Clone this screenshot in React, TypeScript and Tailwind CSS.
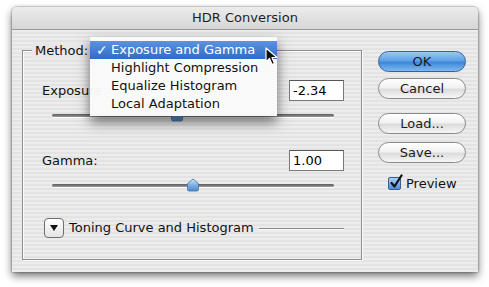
import React from "react";

const font = { fontFamily: '"DejaVu Sans", "Liberation Sans", sans-serif' };

function Slider({ pos }: { pos: number }) {
  return (
    <div className="relative h-[14px] mx-[10px]">
      <div className="absolute left-0 right-0 top-[6px] h-[3px] rounded-full bg-[linear-gradient(#5a5a5a,#9a9a9a)] shadow-[0_1px_0_#fff]" />
      <div className="absolute top-0" style={{ left: `calc(${pos * 100}% - 7px)` }}>
        <svg width="14" height="14" viewBox="0 0 14 14">
          <defs>
            <linearGradient id="thumbg" x1="0" y1="0" x2="0" y2="1">
              <stop offset="0" stopColor="#cfe3f7" />
              <stop offset="0.5" stopColor="#7fb0e3" />
              <stop offset="1" stopColor="#4a8ad3" />
            </linearGradient>
          </defs>
          <path d="M7 1 L12.5 5.5 L12.5 11.5 Q12.5 13 11 13 L3 13 Q1.5 13 1.5 11.5 L1.5 5.5 Z" fill="url(#thumbg)" stroke="#4a6f96" strokeWidth="0.8" />
        </svg>
      </div>
    </div>
  );
}

function AquaButton({ label, primary }: { label: string; primary?: boolean }) {
  return (
    <div
      className={
        "h-[21px] w-[88px] rounded-full flex items-center justify-center text-[13px] text-[#1a1a1a] border " +
        (primary
          ? "border-[#3a5f9a] bg-[linear-gradient(#9cc8f2_0%,#5ea2e6_45%,#3d87d9_55%,#7fbaf0_100%)]"
          : "border-[#8a8a8a] bg-[linear-gradient(#ffffff_0%,#f2f2f2_45%,#dcdcdc_55%,#f6f6f6_100%)]")
      }
    >
      {label}
    </div>
  );
}

function Field({ value }: { value: string }) {
  return (
    <div className="w-[55px] h-[21px] bg-white border border-[#7a7a7a] border-t-[#555] flex items-center pl-[3px] text-[13px] text-black">
      {value}
    </div>
  );
}

export default function App() {
  return (
    <div className="w-[489px] h-[287px] bg-white pl-[12px] pt-[7px] overflow-hidden" style={font}>
      <div className="relative w-[466px] h-[265px] rounded-t-[5px] shadow-[0_4px_9px_rgba(0,0,0,0.55),0_0_2px_rgba(0,0,0,0.6)] bg-[repeating-linear-gradient(0deg,#ececec_0px,#ececec_2px,#e3e3e3_2px,#e3e3e3_4px)]">
        {/* Title bar */}
        <div className="h-[23px] rounded-t-[5px] border-b border-[#9a9a9a] bg-[linear-gradient(#ececec,#d6d6d6)] flex items-center justify-center text-[13px] text-[#1e1e1e]">
          HDR Conversion
        </div>
        {/* Body */}
        <div className="flex">
          {/* Group box */}
          <div className="relative ml-[10px] mt-[20px] w-[340px] h-[210px] border border-[#8e8e8e] shadow-[inset_1px_1px_0_#fafafa,1px_1px_0_#fafafa] flex flex-col">
            <div className="absolute left-[9px] top-[-8px] px-[3px] text-[13px] text-[#111] leading-[16px] bg-[#e8e8e8]">
              Method:
            </div>
            <div className="flex items-center justify-between pl-[19px] pr-[17px] mt-[29px] text-[13px] text-[#111]">
              <span>Exposure:</span>
              <Field value="-2.34" />
            </div>
            <div className="pl-[19px] pr-[17px] mt-[7px]">
              <Slider pos={0.445} />
            </div>
            <div className="flex items-center justify-between pl-[19px] pr-[17px] mt-[28px] text-[13px] text-[#111]">
              <span>Gamma:</span>
              <Field value="1.00" />
            </div>
            <div className="pl-[19px] pr-[17px] mt-[7px]">
              <Slider pos={0.5} />
            </div>
            <div className="flex items-center pl-[21px] pr-[17px] mt-[26px] text-[13px] text-[#111]">
              <div className="w-[20px] h-[20px] rounded-[4px] border border-[#6f6f6f] bg-[linear-gradient(#ffffff,#e4e4e4)] flex items-center justify-center">
                <svg width="8" height="6" viewBox="0 0 8 6">
                  <path d="M0 0 L8 0 L4 6 Z" fill="#111" />
                </svg>
              </div>
              <span className="ml-[5px]">Toning Curve and Histogram</span>
              <div className="flex-1 ml-[5px] h-px bg-[#8a8a8a] shadow-[0_1px_0_#fafafa]" />
            </div>
          </div>
          {/* Right column */}
          <div className="ml-[16px] mt-[21px] flex flex-col">
            <AquaButton label="OK" primary />
            <div className="mt-[6px]">
              <AquaButton label="Cancel" />
            </div>
            <div className="mt-[14px]">
              <AquaButton label="Load..." />
            </div>
            <div className="mt-[8px]">
              <AquaButton label="Save..." />
            </div>
            <div className="mt-[11px] ml-[10px] flex items-center text-[13px] text-[#111]">
              <div className="w-[13px] h-[13px] rounded-[2px] border border-[#3d5d8a] bg-[linear-gradient(#a9d0f5,#4b8fdc)] relative">
                <svg className="absolute left-[0px] top-[-4px]" width="15" height="16" viewBox="0 0 15 16">
                  <path d="M2.5 9 L5.5 12.5 L12.5 1.5" fill="none" stroke="#111" strokeWidth="2.2" strokeLinecap="round" strokeLinejoin="round" />
                </svg>
              </div>
              <span className="ml-[5px]">Preview</span>
            </div>
          </div>
        </div>

        {/* Popup menu overlay */}
        <div className="absolute left-[78px] top-[30px] w-[187px] pt-[4px] pb-[3px] bg-[rgba(250,250,250,0.97)] shadow-[0_6px_12px_rgba(0,0,0,0.55)] text-[13px] text-[#111]">
          <div className="h-[18px] flex items-center text-white bg-[linear-gradient(#5d93de,#2f6cc6)]">
            <span className="w-[21px] pl-[6px] text-[14px] font-bold">✓</span>
            <span>Exposure and Gamma</span>
          </div>
          <div className="h-[18px] flex items-center pl-[21px]">Highlight Compression</div>
          <div className="h-[18px] flex items-center pl-[21px]">Equalize Histogram</div>
          <div className="h-[18px] flex items-center pl-[21px]">Local Adaptation</div>
        </div>

        {/* Cursor */}
        <svg className="absolute left-[253px] top-[40px]" width="14" height="20" viewBox="0 0 14 20">
          <path d="M1 1 L1 15 L4.5 11.5 L7 17.5 L9.5 16.5 L7 10.5 L12 10.5 Z" fill="#111" stroke="#fff" strokeWidth="1.2" strokeLinejoin="round" />
        </svg>
      </div>
    </div>
  );
}
